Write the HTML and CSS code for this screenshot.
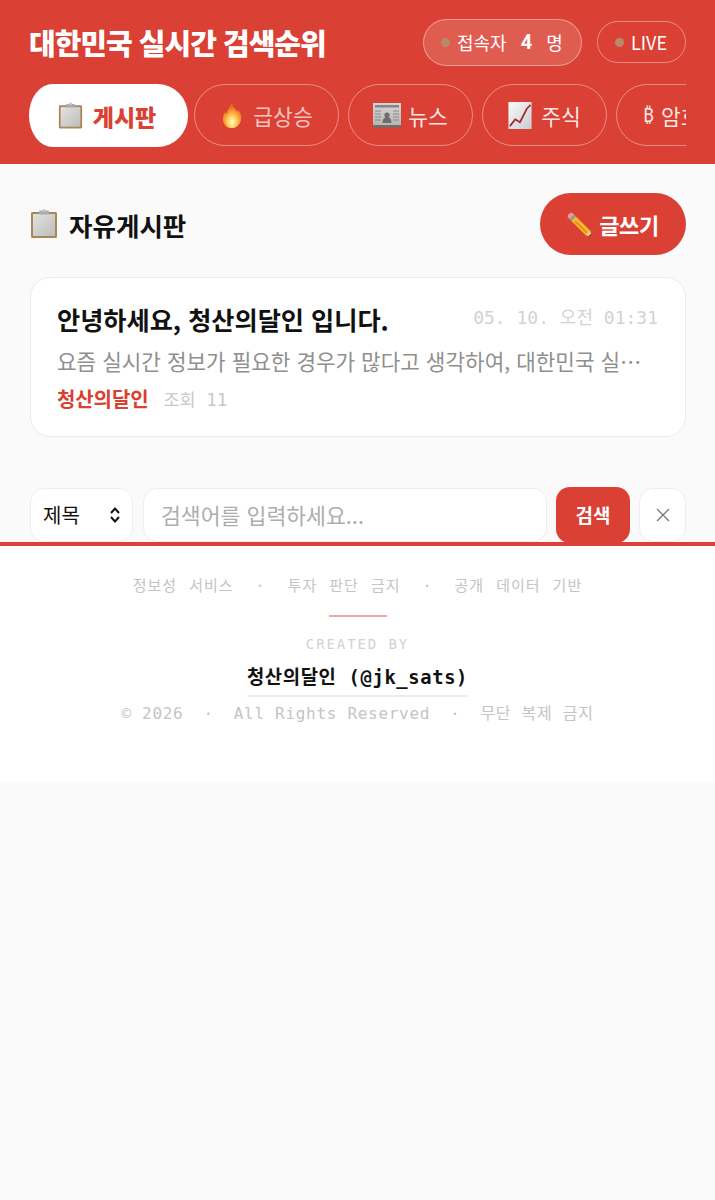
FILE: index.html
```html
<!DOCTYPE html>
<html lang="ko">
<head>
<meta charset="utf-8">
<title>대한민국 실시간 검색순위</title>
<link rel="stylesheet" href="styles.css">
</head>
<body>
<svg class="defs" width="0" height="0" aria-hidden="true">
  <defs>
    <linearGradient id="paper" x1="0" y1="0" x2="1" y2="1"><stop offset="0" stop-color="#e2e2e0"/><stop offset="1" stop-color="#bdbdbb"/></linearGradient>
    <radialGradient id="flame" cx="0.5" cy="0.76" r="0.62"><stop offset="0" stop-color="#fffbd8"/><stop offset="0.38" stop-color="#ffd258"/><stop offset="1" stop-color="#f0661c"/></radialGradient>
    <linearGradient id="news" x1="0" y1="0" x2="0" y2="1"><stop offset="0" stop-color="#d6d6d4"/><stop offset="1" stop-color="#b4b4b2"/></linearGradient>
    <linearGradient id="chartbg" x1="0" y1="0" x2="1" y2="1"><stop offset="0" stop-color="#fafafa"/><stop offset="1" stop-color="#c8ccd2"/></linearGradient>
    <symbol id="i-clip" viewBox="0 0 28 30">
      <rect x="1" y="3" width="26" height="26" rx="1.5" fill="#a98657"/>
      <rect x="3" y="5" width="22" height="22" fill="url(#paper)"/>
      <rect x="9" y="1.5" width="10" height="4" rx="1" fill="#a9adb3"/>
      <rect x="12.4" y="0" width="3.2" height="3" rx="1.5" fill="#c3c6ca"/>
    </symbol>
    <symbol id="i-fire" viewBox="0 0 24 30">
      <path d="M12 1c1 5 4 6 6 10 .6-1 .8-2 .8-3 3 4 4.200 8 3.200 12-1.200 5-5 9-10 9S3 26 2 20.500C1.300 16 3 13 5 10.500c0 1.500.5 2.500 1.300 3.200C6.500 9 9.500 6 12 1z" fill="url(#flame)"/>
    </symbol>
    <symbol id="i-news" viewBox="0 0 28 26">
      <rect x="0" y="1" width="28" height="24" fill="url(#news)"/>
      <rect x="0" y="23" width="28" height="2.500" fill="#6f6f6d"/>
      <rect x="2" y="3" width="24" height="2.500" fill="#858583"/>
      <circle cx="14" cy="13" r="2.600" fill="#6d6d6b"/>
      <path d="M9.500 21c0-4 2-6 4.500-6s4.500 2 4.500 6z" fill="#6d6d6b"/>
      <path d="M2 9h6M2 12h6M2 15h6M2 18h6M20 9h6M20 12h6M20 15h6M20 18h6" stroke="#8a8a88" stroke-width="1.200"/>
    </symbol>
    <symbol id="i-chart" viewBox="0 0 24 28">
      <rect x="0" y="0" width="24" height="28" fill="url(#chartbg)"/>
      <path d="M1.500 25 L7 18 L12 21 L19 7 L23 3" fill="none" stroke="#a52a2a" stroke-width="1.800"/>
    </symbol>
    <symbol id="i-pencil" viewBox="0 0 28 28">
      <path d="M8 3 L26 21 L27 27 L21 26 L3 8 z" fill="#f7b82d"/>
      <path d="M8 3 L3 8 L1.500 6.500 C0.500 5.500 0.500 4 1.500 3 L3 1.500 C4 0.500 5.500 0.500 6.500 1.500 z" fill="#e79aa0"/>
      <path d="M8 3 L3 8 L5 10 L10 5 z" fill="#8f9499"/>
      <path d="M21 26 L27 27 L26 21 C25 23 23 25 21 26 z" fill="#f0d9a8"/>
      <path d="M24.500 26.500 L27 27 L26.500 24.500 z" fill="#222"/>
      <path d="M9 10 L22 23" stroke="#d98a12" stroke-width="1.500"/>
    </symbol>
  </defs>
</svg>
<header class="top">
  <div class="top-row">
    <h1 class="brand">대한민국 실시간 검색순위</h1>
    <div class="status">
      <div class="pill pill-users"><span class="dot"></span><span>접속자</span><strong class="count">4</strong><span>명</span></div>
      <div class="pill pill-live"><span class="dot"></span><span>LIVE</span></div>
    </div>
  </div>
  <nav class="tabs">
    <a class="tab tab-active"><svg class="ico ico-clip"><use href="#i-clip"/></svg>게시판</a>
    <a class="tab tab-fire"><svg class="ico ico-fire"><use href="#i-fire"/></svg>급상승</a>
    <a class="tab tab-news"><svg class="ico ico-news"><use href="#i-news"/></svg>뉴스</a>
    <a class="tab tab-stock"><svg class="ico ico-chart"><use href="#i-chart"/></svg>주식</a>
    <a class="tab tab-crypto"><span class="btc">₿</span>암호화폐</a>
  </nav>
</header>
<main class="board">
  <div class="board-head">
    <h2 class="board-title"><svg class="ico-title"><use href="#i-clip"/></svg>자유게시판</h2>
    <button class="write"><svg class="ico-pencil"><use href="#i-pencil"/></svg>글쓰기</button>
  </div>
  <article class="post">
    <div class="post-top">
      <h3 class="post-title">안녕하세요, 청산의달인 입니다.</h3>
      <time class="post-date">05. 10. 오전 01:31</time>
    </div>
    <p class="post-body">요즘 실시간 정보가 필요한 경우가 많다고 생각하여, 대한민국 실시간 검색순위 서비스를 만들었습니다.</p>
    <div class="post-meta"><span class="author">청산의달인</span><span class="views">조회 11</span></div>
  </article>
  <form class="search">
    <div class="select">제목<svg class="updown" viewBox="0 0 12 18"><path d="M2 7 L6 2.500 L10 7M2 11 L6 15.500 L10 11" fill="none" stroke="#111" stroke-width="2"/></svg></div>
    <div class="query">검색어를 입력하세요...</div>
    <button class="go" type="button">검색</button>
    <button class="clear" type="button"><svg viewBox="0 0 14 14"><path d="M1 1 L13 13M13 1 L1 13" stroke="#777" stroke-width="1.300"/></svg></button>
  </form>
</main>
<footer class="foot">
  <p class="foot-notes"><span>정보성 서비스</span><span>·</span><span>투자 판단 금지</span><span>·</span><span>공개 데이터 기반</span></p>
  <div class="foot-rule"></div>
  <p class="foot-created">CREATED BY</p>
  <p class="foot-name"><span>청산의달인 (@jk_sats)</span></p>
  <p class="foot-copy"><span>© 2026</span><span>·</span><span>All Rights Reserved</span><span>·</span><span>무단 복제 금지</span></p>
</footer>
</body>
</html>
```
FILE: styles.css
```css
* { box-sizing: border-box; }
html, body { margin: 0; padding: 0; }
body {
  background: #fafafa;
  font-family: "Noto Sans CJK KR", "Noto Sans", sans-serif;
  color: #111;
}
.defs { position: absolute; }
h1, h2, h3, p { margin: 0; }

.top {
  background: #da4033;
  height: 164px;
  padding: 18px 29px 0 29px;
}
.top-row { display: flex; justify-content: space-between; align-items: center; height: 48px; }
.brand { font-size: 29px; font-weight: 900; color: #fff; letter-spacing: -1px; line-height: 50px; }
.status { display: flex; align-items: center; gap: 15px; }
.pill { display: flex; align-items: center; color: #fff; border-radius: 24px; font-size: 18px; }
.pill-users {
  width: 159px; height: 47px; padding-left: 17px;
  background: rgba(255,255,255,0.15);
  border: 1.500px solid rgba(255,255,255,0.4);
}
.pill-live {
  width: 89px; height: 42px; padding-left: 17px;
  border: 1.500px solid rgba(255,255,255,0.4);
}
.dot { width: 9px; height: 9px; border-radius: 50%; background: #b98a6a; margin-right: 7px; flex: none; }
.count { font-size: 20px; font-weight: 700; margin: 0 14px; font-family: "Roboto", sans-serif; }

.tabs { display: flex; align-items: flex-start; overflow: hidden; margin-top: 18px; height: 63px; }
.tab {
  flex: none; display: flex; align-items: center; justify-content: center;
  height: 62px; border-radius: 31px;
  border: 1.500px solid rgba(255,255,255,0.4);
  color: rgba(255,255,255,0.7);
  font-size: 21.500px; font-weight: 400;
  margin-right: 9px;
}
.tab-active {
  width: 159px; height: 63px; background: #fff; border: 0;
  color: #da4033; font-size: 23px; font-weight: 900; margin-right: 6px;
  border-radius: 0 31px 31px 0 / 0 31px 31px 0;
  border-top-left-radius: 24px 31px; border-bottom-left-radius: 24px 31px;
  padding-right: 3px;
}
.tab-fire { width: 145px; }
.tab-news { width: 125px; }
.tab-stock { width: 125px; }
.tab-crypto { width: 160px; justify-content: flex-start; padding-left: 26px; }
.tab-news, .tab-stock, .tab-crypto { color: rgba(255,255,255,0.88); }
.ico { flex: none; margin-right: 7px; }
.ico-clip { width: 25px; height: 28px; margin-right: 10px; }
.ico-fire { width: 24px; height: 27px; margin-right: 9px; }
.ico-news { width: 28px; height: 26px; }
.ico-chart { width: 24px; height: 27px; margin-right: 9px; }
.btc { margin-right: 7px; font-family: "Noto Sans", sans-serif; font-size: 19px; }

.board { height: 378px; padding: 29px 29px 0 30px; }
.board-head { display: flex; justify-content: space-between; align-items: center; height: 62px; }
.board-title { display: flex; align-items: center; font-size: 25.500px; font-weight: 700; }
.ico-title { width: 28px; height: 32px; margin-right: 11px; }
.write {
  display: flex; align-items: center; justify-content: center; width: 146px; height: 62px;
  background: #da4033; color: #fff; border: 0; border-radius: 31px;
  font: 700 22px "Noto Sans CJK KR", sans-serif; letter-spacing: -0.4px;
}
.ico-pencil { width: 25px; height: 25px; margin-right: 7px; }

.post {
  height: 160px; margin-top: 22px; padding: 20px 27px 0 26px;
  background: #fff; border: 1.500px solid #ececec; border-radius: 20px;
}
.post-top { display: flex; justify-content: space-between; align-items: center; height: 42px; }
.post-title { font-size: 25.200px; font-weight: 700; line-height: 40px; }
.post-date { font-family: "DejaVu Sans Mono", "Noto Sans CJK KR", monospace; font-size: 18px; color: #d2d2d2; margin-top: -6px; }
.post-body {
  font-size: 21.300px; color: #8f8f8f; line-height: 30px; margin-top: 6px; padding-right: 10px;
  white-space: nowrap; overflow: hidden; text-overflow: ellipsis;
}
.post-meta { display: flex; align-items: center; gap: 15px; margin-top: 8px; }
.author { color: #d8402f; font-size: 20px; font-weight: 700; letter-spacing: -0.1px; }
.views { color: #c9c9c9; font-size: 17.500px; font-family: "DejaVu Sans Mono", "Noto Sans CJK KR", monospace; }

.search { display: flex; align-items: center; margin-top: 50px; height: 55px; }
.select {
  display: flex; align-items: center; justify-content: space-between;
  width: 103px; height: 54px; margin-right: 10px; padding: 0 11px 0 12px;
  background: #fff; border: 1.500px solid #eeeeee; border-radius: 14px;
  font-size: 20px; color: #111;
}
.updown { width: 12px; height: 18px; }
.query {
  width: 404px; height: 54px; margin-right: 9px; padding-left: 17px;
  display: flex; align-items: center;
  background: #fff; border: 1.500px solid #eeeeee; border-radius: 14px;
  font-size: 21.600px; color: #adadad;
}
.go {
  width: 74px; height: 56px; margin-right: 9px; border: 0; border-radius: 14px;
  background: #da4033; color: #fff; font: 700 19px "Noto Sans CJK KR", sans-serif;
}
.clear {
  width: 47px; height: 54px; padding: 0; background: #fff;
  border: 1.500px solid #eeeeee; border-radius: 14px;
  display: flex; align-items: center; justify-content: center;
}
.clear svg { width: 14px; height: 14px; }

.foot {
  background: #fff; border-top: 4px solid #d8423a; height: 240px;
  text-align: center; color: #c4c4c4;
  font-family: "DejaVu Sans Mono", "Noto Sans CJK KR", monospace;
}
.foot-notes { display: flex; justify-content: center; gap: 22px; font-size: 15px; line-height: 20px; padding-top: 30px; letter-spacing: 1px; word-spacing: 2px; }
.foot-rule { width: 58px; height: 2px; background: #efa9a3; margin: 19px auto 0; }
.foot-created { font-size: 14px; letter-spacing: 1.900px; line-height: 20px; margin-top: 17px; color: #d2d2d2; }
.foot-name { margin-top: 10px; font-size: 18.800px; font-weight: 700; line-height: 28px; color: #111; }
.foot-name span { display: inline-block; border-bottom: 2px solid #ededed; padding-bottom: 3px; letter-spacing: 0.650px; }
.foot-copy { display: flex; justify-content: center; gap: 20px; margin-top: 7px; font-size: 16px; line-height: 20px; letter-spacing: 0.700px; }
```
